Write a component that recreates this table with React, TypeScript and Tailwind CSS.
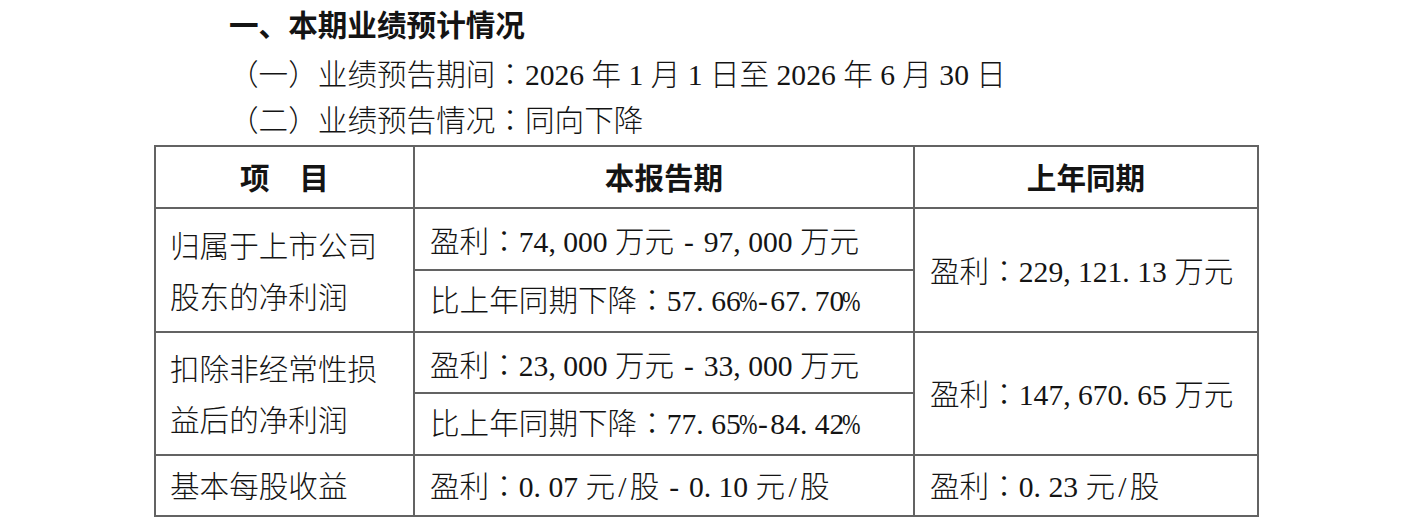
import type { ReactNode } from 'react'
import clsx from 'clsx'

// half-width punctuation, like the song-style font of the original document
function Txt({ s }: { s: string }) {
  return (
    <>
      {s.split('').map((ch, i) => {
        if (ch === ',' || ch === '.') {
          return (
            <span key={i} className="inline-block w-[0.5em]">
              {ch}
            </span>
          )
        }
        if (ch === '%' || ch === '-' || ch === '/') {
          return (
            <span key={i} className="inline-flex w-[0.5em] justify-center">
              <span className={clsx('inline-block', ch === '%' && 'scale-x-75')}>{ch}</span>
            </span>
          )
        }
        if (ch === '：') {
          return (
            <span key={i} className="font-['Liberation_Serif','Noto_Sans_CJK_TC',serif]">
              {ch}
            </span>
          )
        }
        return ch
      })}
    </>
  )
}

function Cell({ children, className }: { children?: ReactNode; className?: string }) {
  return <div className={clsx('flex items-center bg-white', className)}>{children}</div>
}

export default function App() {
  return (
    <div className="min-h-screen bg-white text-[#141414] font-['Liberation_Serif','Noto_Sans_CJK_SC',serif] text-[29.6px] leading-[46.5px]">
      <div className="pl-[229px] pt-[5px]">
        <div className="font-bold -mt-[2px] pb-[2px]">一、本期业绩预计情况</div>
        <div className="font-light">
          <Txt s="（一）业绩预告期间：2026 年 1 月 1 日至 2026 年 6 月 30 日" />
        </div>
        <div className="font-light">
          <Txt s="（二）业绩预告情况：同向下降" />
        </div>
      </div>

      <div className="ml-[154px] grid w-fit grid-cols-[257px_498px_342px] grid-rows-[60px_60px_60px_59px_60px_59px] gap-[2px] bg-[#636363] p-[2px] font-light">
        <Cell className="justify-center pt-[5px] font-bold">项　目</Cell>
        <Cell className="justify-center pt-[5px] font-bold">本报告期</Cell>
        <Cell className="justify-center pt-[5px] font-bold">上年同期</Cell>

        <Cell className="row-span-2 pl-[14px] pt-[6px] leading-[51px]">
          <div>
            归属于上市公司
            <br />
            股东的净利润
          </div>
        </Cell>
        <Cell className="pl-[15px] pt-[8px]">
          <span>
            <Txt s="盈利：74,000 万元 - 97,000 万元" />
          </span>
        </Cell>
        <Cell className="row-span-2 pl-[15px] pt-[5px]">
          <span>
            <Txt s="盈利：229,121.13 万元" />
          </span>
        </Cell>
        <Cell className="pl-[15px] pt-[1px]">
          <span>
            <Txt s="比上年同期下降：57.66%-67.70%" />
          </span>
        </Cell>

        <Cell className="row-span-2 pl-[14px] pt-[6px] leading-[51px]">
          <div>
            扣除非经常性损
            <br />
            益后的净利润
          </div>
        </Cell>
        <Cell className="pl-[15px] pt-[8px]">
          <span>
            <Txt s="盈利：23,000 万元 - 33,000 万元" />
          </span>
        </Cell>
        <Cell className="row-span-2 pl-[15px] pt-[5px]">
          <span>
            <Txt s="盈利：147,670.65 万元" />
          </span>
        </Cell>
        <Cell className="pl-[15px] pt-[1px]">
          <span>
            <Txt s="比上年同期下降：77.65%-84.42%" />
          </span>
        </Cell>

        <Cell className="pl-[14px] pt-[5px]">基本每股收益</Cell>
        <Cell className="pl-[15px] pt-[5px]">
          <span>
            <Txt s="盈利：0.07 元/股 - 0.10 元/股" />
          </span>
        </Cell>
        <Cell className="pl-[15px] pt-[5px]">
          <span>
            <Txt s="盈利：0.23 元/股" />
          </span>
        </Cell>
      </div>
    </div>
  )
}
